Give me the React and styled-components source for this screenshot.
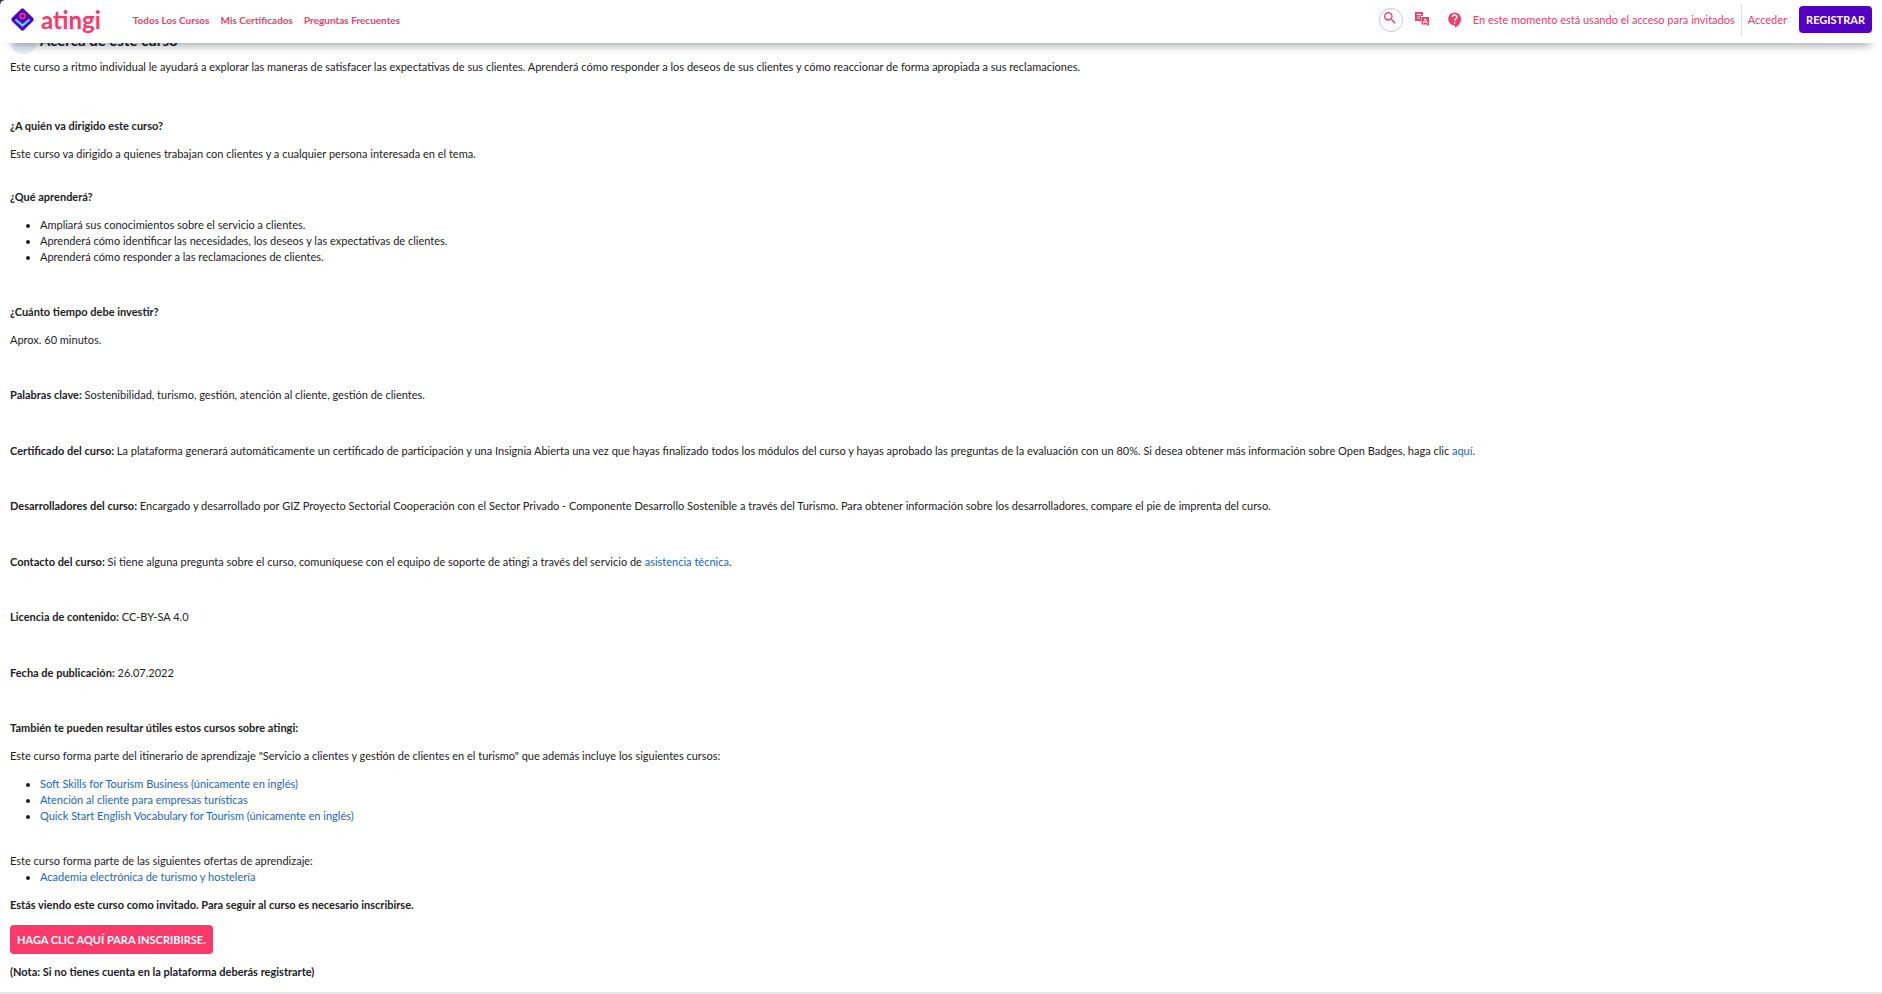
import React from "react";
import styled, { createGlobalStyle } from "styled-components";
import { MdContactSupport, MdSearch } from "react-icons/md";

const GlobalStyle = createGlobalStyle`
  * {
    box-sizing: border-box;
  }
  body {
    margin: 0;
    background: #fff;
    color: #1d2125;
    font-family: Lato, "Liberation Sans", sans-serif;
    font-size: 11px;
    line-height: 16px;
  }
`;

const Header = styled.header`
  position: sticky;
  top: 0;
  z-index: 1;
  display: flex;
  align-items: center;
  justify-content: space-between;
  height: 43px;
  padding: 0 10px;
  background: #fff;
  box-shadow: 0 14px 10px -12px rgba(0, 9, 20, 0.4);
  color: #f93969;
  &::before {
    content: "";
    position: absolute;
    top: 0;
    left: 0;
    width: 4px;
    height: 4px;
    background: radial-gradient(circle at 100% 100%, transparent 3px, #333 4px);
  }
`;
const Side = styled.div`
  display: flex;
  align-items: center;
  padding-bottom: 4px;
`;
const Brand = styled.a`
  display: flex;
  align-items: center;
  gap: 6px;
  margin-right: 32px;
  color: #f93969;
  font-size: 24px;
  font-weight: 700;
  line-height: 32px;
  text-decoration: none;
`;
const Nav = styled.nav`
  display: flex;
  gap: 11px;
`;
const NavLink = styled.a`
  color: #f93969;
  font-size: 10px;
  font-weight: 700;
  text-decoration: none;
`;
const IconButton = styled.button`
  display: flex;
  align-items: center;
  justify-content: center;
  width: 24px;
  height: 24px;
  padding: 0;
  border: none;
  background: none;
  color: #f93969;
  cursor: pointer;
`;
const SearchButton = styled(IconButton)`
  padding: 0 2px 4px 0;
  border: 1px solid #c9c9c9;
  border-radius: 50%;
`;
const Tools = styled.div`
  display: flex;
  align-items: center;
  gap: 8px;
  margin-right: 6px;
`;
const Guest = styled.span`
  padding-right: 6px;
  border-right: 1px solid #dee2e6;
  line-height: 32px;
`;
const Login = styled.a`
  margin: 0 12px 0 6px;
  color: #f93969;
  text-decoration: none;
`;
const Button = styled.button`
  height: ${(props) => (props.$primary ? "27px" : "29px")};
  padding: 0 7px;
  border: none;
  border-radius: 4px;
  background: ${(props) => (props.$primary ? "#5300c4" : "#f93969")};
  color: #fff;
  font-family: inherit;
  font-size: 11px;
  font-weight: 700;
  cursor: pointer;
`;

const Main = styled.main`
  padding: 0 10px;
  margin-top: -17px;
`;
const Heading = styled.h2`
  display: flex;
  align-items: center;
  gap: 3px;
  margin: 0 0 5px;
  font-size: 15px;
  font-weight: 700;
  line-height: 28px;
`;
const Dot = styled.span`
  width: 27px;
  height: 28px;
  border-radius: 50%;
  background: #e4edf8;
`;
const Text = styled.p`
  margin: ${(props) => props.$top || "0"} 0 ${(props) => (props.$flush ? "0" : "12px")};
`;
const Title = styled.h3`
  margin: ${(props) => props.$top || "0"} 0 12px;
  font-size: inherit;
  font-weight: 700;
`;
const List = styled.ul`
  margin: 0 0 12px;
  padding-left: 30px;
`;
const Link = styled.a`
  color: #1866c4;
  text-decoration: none;
`;
const Facts = styled.div`
  margin-bottom: 39px;
`;
const Fact = styled.p`
  margin: 39px 0 0;
  &:nth-child(even) {
    margin-top: 40px;
  }
`;
const Footer = styled.footer`
  height: 3px;
  background: #e6e6e6;
`;

const Logo = () => (
  <svg width="25" height="25" viewBox="0 0 25 25" aria-hidden="true">
    <rect x="4" y="4" width="17" height="17" rx="2" fill="#5300c4" transform="rotate(45 12.5 12.5)" />
    <circle cx="12.5" cy="9" r="2.5" fill="none" stroke="#f93969" strokeWidth="1.5" />
    <path d="M5.5 12.5l7 6 7-6" fill="none" stroke="#4be1f5" strokeWidth="2.2" />
  </svg>
);

const TranslateIcon = () => (
  <svg width="15" height="15" viewBox="0 0 15 15" fill="none" aria-hidden="true">
    <path d="M0 0h8v4H6v5H0z" fill="#f93969" />
    <path d="M1.5 2.5h5M4 1.2v1.3M2 7c2-1 3-2.5 3.3-4.5M2.3 4c.5 1 1.5 2 2.7 2.5" stroke="#fff" strokeWidth=".8" />
    <path d="M6.5 5H14v9l-2-1.5H6.5z" fill="#f93969" />
    <path d="M8 11.5l2.2-5 2.3 5M8.700 10h3" stroke="#fff" strokeWidth="1" />
  </svg>
);

const App = () => {
  return (
    <>
      <GlobalStyle />
      <Header>
        <Side>
          <Brand href="#">
            <Logo />
            atingi
          </Brand>
          <Nav>
            <NavLink href="#">Todos Los Cursos</NavLink>
            <NavLink href="#">Mis Certificados</NavLink>
            <NavLink href="#">Preguntas Frecuentes</NavLink>
          </Nav>
        </Side>
        <Side>
          <Tools>
            <SearchButton aria-label="Buscar">
              <MdSearch size={16} />
            </SearchButton>
            <IconButton aria-label="Idioma">
              <TranslateIcon />
            </IconButton>
            <IconButton aria-label="Ayuda">
              <MdContactSupport size={18} />
            </IconButton>
          </Tools>
          <Guest>En este momento está usando el acceso para invitados</Guest>
          <Login href="#">Acceder</Login>
          <Button $primary>REGISTRAR</Button>
        </Side>
      </Header>
      <Main>
        <Heading>
          <Dot />
          Acerca de este curso
        </Heading>
        <Text>
          Este curso a ritmo individual le ayudará a explorar las maneras de
          satisfacer las expectativas de sus clientes. Aprenderá cómo responder
          a los deseos de sus clientes y cómo reaccionar de forma apropiada a
          sus reclamaciones.
        </Text>
        <Title $top="43px">¿A quién va dirigido este curso?</Title>
        <Text>
          Este curso va dirigido a quienes trabajan con clientes y a cualquier
          persona interesada en el tema.
        </Text>
        <Title $top="27px">¿Qué aprenderá?</Title>
        <List>
          <li>Ampliará sus conocimientos sobre el servicio a clientes.</li>
          <li>
            Aprenderá cómo identificar las necesidades, los deseos y las
            expectativas de clientes.
          </li>
          <li>Aprenderá cómo responder a las reclamaciones de clientes.</li>
        </List>
        <Title $top="39px">¿Cuánto tiempo debe investir?</Title>
        <Text $flush>Aprox. 60 minutos.</Text>
        <Facts>
          <Fact>
            <b>Palabras clave:</b> Sostenibilidad, turismo, gestión, atención al
            cliente, gestión de clientes.
          </Fact>
          <Fact>
            <b>Certificado del curso:</b> La plataforma generará automáticamente
            un certificado de participación y una Insignia Abierta una vez que
            hayas finalizado todos los módulos del curso y hayas aprobado las
            preguntas de la evaluación con un 80%. Si desea obtener más
            información sobre Open Badges, haga clic <Link href="#">aquí</Link>.
          </Fact>
          <Fact>
            <b>Desarrolladores del curso:</b> Encargado y desarrollado por GIZ
            Proyecto Sectorial Cooperación con el Sector Privado - Componente
            Desarrollo Sostenible a través del Turismo. Para obtener información
            sobre los desarrolladores, compare el pie de imprenta del curso.
          </Fact>
          <Fact>
            <b>Contacto del curso:</b> Si tiene alguna pregunta sobre el curso,
            comuníquese con el equipo de soporte de atingi a través del servicio
            de <Link href="#">asistencia técnica</Link>.
          </Fact>
          <Fact>
            <b>Licencia de contenido:</b> CC-BY-SA 4.0
          </Fact>
          <Fact>
            <b>Fecha de publicación:</b> 26.07.2022
          </Fact>
        </Facts>
        <Title>También te pueden resultar útiles estos cursos sobre atingi:</Title>
        <Text>
          Este curso forma parte del itinerario de aprendizaje "Servicio a
          clientes y gestión de clientes en el turismo" que además incluye los
          siguientes cursos:
        </Text>
        <List>
          <li>
            <Link href="#">Soft Skills for Tourism Business (únicamente en inglés)</Link>
          </li>
          <li>
            <Link href="#">Atención al cliente para empresas turísticas</Link>
          </li>
          <li>
            <Link href="#">
              Quick Start English Vocabulary for Tourism (únicamente en inglés)
            </Link>
          </li>
        </List>
        <Text $top="29px" $flush>
          Este curso forma parte de las siguientes ofertas de aprendizaje:
        </Text>
        <List>
          <li>
            <Link href="#">Academia electrónica de turismo y hostelería</Link>
          </li>
        </List>
        <Title>
          Estás viendo este curso como invitado. Para seguir al curso es
          necesario inscribirse.
        </Title>
        <Button>HAGA CLIC AQUÍ PARA INSCRIBIRSE.</Button>
        <Title $top="10px">
          (Nota: Si no tienes cuenta en la plataforma deberás registrarte)
        </Title>
      </Main>
      <Footer />
    </>
  );
};

export default App;
